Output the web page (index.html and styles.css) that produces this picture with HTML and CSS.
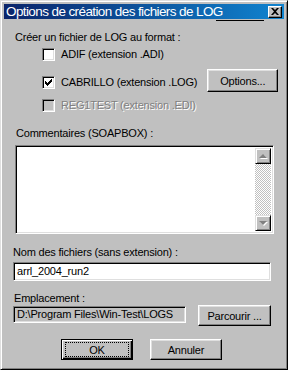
FILE: index.html
```
<!DOCTYPE html>
<html>
<head>
  <title>Options de création des fichiers de LOG</title>
  <link rel="stylesheet" href="styles.css">
</head>
<body>

  <div class="window">
    <div class="titlebar">
      <span class="title">Options de création des fichiers de LOG</span>
      <div class="close-btn">
        <svg width="8" height="7" viewBox="0 0 8 7"><path d="M0 0h2l2 2 2-2h2L5 3.5 8 7H6L4 5 2 7H0l3-3.5z" fill="#000"/></svg>
      </div>
    </div>
    <div class="caption-rule"></div>

    <div class="content">
      <div class="label intro">Créer un fichier de LOG au format :</div>

      <div class="check-row adif">
        <span class="checkbox"></span>
        <span class="check-label">ADIF (extension .ADI)</span>
      </div>

      <div class="check-row cabrillo">
        <span class="checkbox checked">
          <svg width="7" height="7" viewBox="0 0 7 7"><path d="M0 2h1v1h1v1h1V3h1V2h1V1h1V0h1v3H6v1H5v1H4v1H3v1H2V6H1V5H0z" fill="#000"/></svg>
        </span>
        <span class="check-label">CABRILLO (extension .LOG)</span>
        <div class="button options-btn">Options...</div>
      </div>

      <div class="check-row disabled">
        <span class="checkbox"></span>
        <span class="check-label">REG1TEST (extension .EDI)</span>
      </div>

      <div class="label comments-label">Commentaires (SOAPBOX) :</div>
      <div class="field memo">
        <div class="memo-text"></div>
        <div class="scrollbar">
          <div class="scroll-btn"><span class="arrow up"></span></div>
          <div class="scroll-track"></div>
          <div class="scroll-btn"><span class="arrow down"></span></div>
        </div>
      </div>

      <div class="label name-label">Nom des fichiers (sans extension) :</div>
      <div class="field name-field">arrl_2004_run2</div>

      <div class="label place-label">Emplacement :</div>
      <div class="path-row">
        <div class="field path-field">D:\Program Files\Win-Test\LOGS</div>
        <div class="button browse-btn">Parcourir ...</div>
      </div>

      <div class="actions">
        <div class="button default-btn"><span class="focus">OK</span></div>
        <div class="button cancel-btn">Annuler</div>
      </div>
    </div>
  </div>

</body>
</html>
```

FILE: styles.css
```
body {
  margin: 0;
  background: #c0c0c0;
  font-family: 'Liberation Sans', Arial, sans-serif;
  font-size: 11px;
  color: #000;
}

.window {
  width: 288px;
  height: 370px;
  box-sizing: border-box;
  background: #c0c0c0;
  border: 1px solid;
  border-color: #dfdfdf #000 #000 #dfdfdf;
  box-shadow: inset 1px 1px #fff, inset -1px -1px #808080;
  padding: 3px 3px 0 3px;
}

.titlebar {
  height: 15px;
  background: linear-gradient(to right, #0a246a, #1084d0);
  display: flex;
  align-items: center;
  justify-content: space-between;
  padding: 0 2px 0 2px;
}

.title {
  color: #fff;
  font-size: 13.5px;
  letter-spacing: -0.6px;
  line-height: 15px;
}

.close-btn {
  width: 14px;
  height: 12px;
  box-sizing: border-box;
  background: #c0c0c0;
  border: 1px solid;
  border-color: #fff #000 #000 #fff;
  box-shadow: inset -1px -1px #808080;
  display: flex;
  align-items: center;
  justify-content: center;
}

.caption-rule {
  width: 48px;
  height: 1px;
  background: #000;
  margin: 1px 0 0 212px;
}

.content {
  padding: 0 0 0 9px;
}

.label {
  line-height: 14px;
  letter-spacing: -0.2px;
}

.intro {
  margin: 9px 0 0 2px;
}

.check-row {
  display: flex;
  align-items: flex-start;
  padding-left: 29px;
  letter-spacing: -0.2px;
}

.check-row.adif {
  margin-top: 4px;
  height: 13px;
}

.check-row.cabrillo {
  margin-top: 8px;
  height: 23px;
}

.check-row.cabrillo .checkbox {
  margin-top: 7px;
}

.check-row.cabrillo .check-label {
  margin-top: 7px;
}

.check-row.disabled {
  margin-top: 7px;
  height: 13px;
  color: #808080;
  text-shadow: 1px 1px #fff;
}

.checkbox {
  width: 13px;
  height: 13px;
  box-sizing: border-box;
  background: #fff;
  border: 1px solid;
  border-color: #808080 #fff #fff #808080;
  box-shadow: inset 1px 1px #000, inset -1px -1px #dfdfdf;
  display: flex;
  align-items: center;
  justify-content: center;
  flex: none;
}

.check-row.disabled .checkbox {
  background: #c0c0c0;
}

.check-label {
  margin-left: 6px;
  line-height: 13px;
}

.button {
  box-sizing: border-box;
  background: #c0c0c0;
  border: 1px solid;
  border-color: #fff #000 #000 #fff;
  box-shadow: inset -1px -1px #808080, inset 1px 1px #dfdfdf;
  display: flex;
  align-items: center;
  justify-content: center;
  letter-spacing: -0.2px;
}

.options-btn {
  width: 71px;
  height: 23px;
  margin-left: 10px;
}

.comments-label {
  margin: 14px 0 0 3px;
}

.field {
  box-sizing: border-box;
  background: #fff;
  border: 1px solid;
  border-color: #808080 #fff #fff #808080;
  box-shadow: inset 1px 1px #000, inset -1px -1px #dfdfdf;
}

.memo {
  width: 259px;
  height: 89px;
  margin: 5px 0 0 2px;
  padding: 2px;
  display: flex;
}

.memo-text {
  flex: 1;
}

.scrollbar {
  width: 16px;
  display: flex;
  flex-direction: column;
}

.scroll-btn {
  height: 16px;
  box-sizing: border-box;
  background: #c0c0c0;
  border: 1px solid;
  border-color: #dfdfdf #000 #000 #dfdfdf;
  box-shadow: inset 1px 1px #fff, inset -1px -1px #808080;
  display: flex;
  align-items: center;
  justify-content: center;
}

.scroll-track {
  flex: 1;
  background: repeating-conic-gradient(#c0c0c0 0 25%, #fff 0 50%) 0 0 / 2px 2px;
}

.arrow {
  width: 0;
  height: 0;
  border-left: 4px solid transparent;
  border-right: 4px solid transparent;
}

.arrow.up {
  border-bottom: 4px solid #808080;
  filter: drop-shadow(1px 1px 0 #fff);
}

.arrow.down {
  border-top: 4px solid #808080;
  filter: drop-shadow(1px 1px 0 #fff);
}

.name-label {
  margin: 11px 0 0 0;
}

.name-field {
  width: 258px;
  height: 19px;
  margin-top: 3px;
  padding: 0 3px;
  line-height: 17px;
  letter-spacing: -0.2px;
}

.place-label {
  margin: 10px 0 0 1px;
}

.path-row {
  display: flex;
  align-items: flex-start;
  margin-top: 0;
}

.path-field {
  width: 173px;
  height: 17px;
  margin-top: 1px;
  background: #c0c0c0;
  padding: 0 3px;
  line-height: 15px;
  letter-spacing: -0.2px;
}

.browse-btn {
  width: 73px;
  height: 21px;
  margin-left: 12px;
}

.actions {
  display: flex;
  gap: 17px;
  margin: 13px 0 0 48px;
}

.actions .button {
  width: 72px;
  height: 21px;
}

.default-btn {
  border-color: #000;
  box-shadow: inset 1px 1px #fff, inset -1px -1px #000, inset -2px -2px #808080;
}

.focus {
  width: 62px;
  height: 13px;
  outline: 1px dotted #000;
  display: flex;
  align-items: center;
  justify-content: center;
}
```
